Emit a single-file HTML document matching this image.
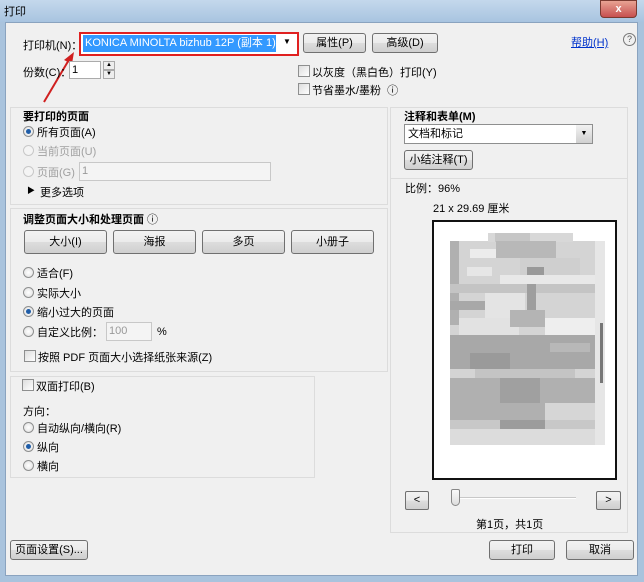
<!DOCTYPE html>
<html><head><meta charset="utf-8"><style>
*{box-sizing:border-box;margin:0;padding:0}
body{width:644px;height:582px;overflow:hidden;background:#a9c3dd;font-family:"Liberation Sans","Noto Sans CJK SC",sans-serif;font-size:11px;color:#000;position:relative}
.a{position:absolute;white-space:nowrap}
.title{left:0;top:0;width:644px;height:22px;background:linear-gradient(#c4d8ec,#a8c4e0)}
.dlg{left:5px;top:22px;width:633px;height:554px;background:#f0f0f0;border:1px solid #8aa3bf}
.panel{border:1px solid #dcdcdc;background:#f0f0f0}
.btn{border:1px solid #707070;border-radius:3px;background:linear-gradient(#f2f2f2,#ebebeb 50%,#dddddd 51%,#cfcfcf);text-align:center;font-size:11px}
.radio{width:11px;height:11px;border-radius:50%;border:1px solid #8e8f8f;background:radial-gradient(#fff,#ddd)}
.radio.on::after{content:"";position:absolute;left:2px;top:2px;width:5px;height:5px;border-radius:50%;background:#1f5da8}
.radio.dis{border-color:#c8c8c8;background:#f4f4f4}
.chk{width:12px;height:12px;border:1px solid #8e8f8f;background:linear-gradient(135deg,#ddd,#fff)}
.inp{border:1px solid #ababab;background:#fff}
.dis{color:#a0a0a0}
b{font-weight:bold}
</style></head><body>
<div class="a title"></div>
<div class="a" style="left:4px;top:3px;font-size:11px">打印</div>
<div class="a" style="left:600px;top:0;width:37px;height:18px;border-radius:0 0 4px 4px;background:linear-gradient(#e8a393,#c75050);border:1px solid #7a3a30;color:#fff;text-align:center;font-weight:bold;line-height:16px">x</div>
<div class="a dlg"></div>

<!-- top row -->
<div class="a" style="left:23px;top:37px">打印机(N)：</div>
<div class="a" style="left:79px;top:32px;width:220px;height:24px;border:2px solid #e02020;background:#fff"></div>
<div class="a" style="left:83px;top:35px;width:193px;height:17px;background:#3399ff;color:#fff;padding-left:2px;line-height:17px">KONICA MINOLTA bizhub 12P (副本 1)</div>
<div class="a" style="left:283px;top:37px;font-size:8px">▼</div>
<svg class="a" style="left:40px;top:50px" width="40" height="60"><line x1="4" y1="52" x2="30" y2="8" stroke="#d02020" stroke-width="2"/><polygon points="34,2 24,10 32,14" fill="#d02020"/></svg>
<div class="a btn" style="left:303px;top:33px;width:63px;height:20px;line-height:18px">属性(P)</div>
<div class="a btn" style="left:372px;top:33px;width:66px;height:20px;line-height:18px">高级(D)</div>
<div class="a" style="left:571px;top:34px;color:#0033cc;text-decoration:underline">帮助(H)</div>
<div class="a" style="left:623px;top:33px;width:13px;height:13px;border:1px solid #777;border-radius:50%;font-size:9px;text-align:center;line-height:11px;color:#555">?</div>

<div class="a" style="left:23px;top:64px">份数(C)：</div>
<div class="a inp" style="left:69px;top:61px;width:32px;height:18px;padding-left:2px;line-height:16px">1</div>
<div class="a" style="left:103px;top:61px;width:12px;height:9px;border:1px solid #aaa;background:#eee;font-size:6px;text-align:center;line-height:7px">▲</div>
<div class="a" style="left:103px;top:70px;width:12px;height:9px;border:1px solid #aaa;background:#eee;font-size:6px;text-align:center;line-height:7px">▼</div>
<div class="a chk" style="left:298px;top:65px"></div><div class="a" style="left:312px;top:64px">以灰度（黑白色）打印(Y)</div>
<div class="a chk" style="left:298px;top:83px"></div><div class="a" style="left:312px;top:82px">节省墨水/墨粉 &nbsp;ⓘ</div>

<!-- section 1 -->
<div class="a panel" style="left:10px;top:107px;width:378px;height:98px"></div>
<div class="a" style="left:23px;top:108px"><b>要打印的页面</b></div>
<div class="a radio on" style="left:23px;top:126px"></div><div class="a" style="left:37px;top:124px">所有页面(A)</div>
<div class="a radio dis" style="left:23px;top:145px"></div><div class="a dis" style="left:37px;top:143px">当前页面(U)</div>
<div class="a radio dis" style="left:23px;top:166px"></div><div class="a dis" style="left:37px;top:164px">页面(G)</div>
<div class="a inp" style="left:79px;top:162px;width:192px;height:19px;border-color:#c8c8c8;background:#f4f4f4;color:#999;padding-left:2px;line-height:17px">1</div>
<div class="a" style="left:27px;top:185px;font-size:8px">▶</div><div class="a" style="left:40px;top:184px">更多选项</div>

<!-- section 2 -->
<div class="a panel" style="left:10px;top:208px;width:378px;height:164px"></div>
<div class="a" style="left:23px;top:211px"><b>调整页面大小和处理页面</b> ⓘ</div>
<div class="a btn" style="left:24px;top:230px;width:83px;height:24px;line-height:22px">大小(I)</div>
<div class="a btn" style="left:113px;top:230px;width:83px;height:24px;line-height:22px">海报</div>
<div class="a btn" style="left:202px;top:230px;width:83px;height:24px;line-height:22px">多页</div>
<div class="a btn" style="left:291px;top:230px;width:83px;height:24px;line-height:22px">小册子</div>
<div class="a radio" style="left:23px;top:267px"></div><div class="a" style="left:37px;top:265px">适合(F)</div>
<div class="a radio" style="left:23px;top:287px"></div><div class="a" style="left:37px;top:285px">实际大小</div>
<div class="a radio on" style="left:23px;top:306px"></div><div class="a" style="left:37px;top:304px">缩小过大的页面</div>
<div class="a radio" style="left:23px;top:326px"></div><div class="a" style="left:37px;top:324px">自定义比例：</div>
<div class="a inp" style="left:106px;top:322px;width:46px;height:19px;border-color:#c8c8c8;background:#f4f4f4;color:#999;padding-left:2px;line-height:17px">100</div>
<div class="a" style="left:157px;top:326px">%</div>
<div class="a chk" style="left:24px;top:350px"></div><div class="a" style="left:38px;top:349px">按照 PDF 页面大小选择纸张来源(Z)</div>

<!-- section 3 -->
<div class="a panel" style="left:10px;top:376px;width:305px;height:102px"></div>
<div class="a chk" style="left:22px;top:379px"></div><div class="a" style="left:36px;top:378px">双面打印(B)</div>
<div class="a" style="left:23px;top:403px">方向：</div>
<div class="a radio" style="left:23px;top:422px"></div><div class="a" style="left:37px;top:420px">自动纵向/横向(R)</div>
<div class="a radio on" style="left:23px;top:441px"></div><div class="a" style="left:37px;top:439px">纵向</div>
<div class="a radio" style="left:23px;top:460px"></div><div class="a" style="left:37px;top:458px">横向</div>

<!-- right panel -->
<div class="a panel" style="left:390px;top:107px;width:238px;height:426px"></div>
<div class="a" style="left:390px;top:178px;width:238px;height:1px;background:#dcdcdc"></div>
<div class="a" style="left:404px;top:108px"><b>注释和表单(M)</b></div>
<div class="a inp" style="left:404px;top:124px;width:189px;height:20px;border-color:#8e8f8f;padding-left:3px;line-height:18px">文档和标记</div>
<div class="a" style="left:576px;top:125px;width:16px;height:18px;background:linear-gradient(#f2f2f2,#d0d0d0);font-size:7px;text-align:center;line-height:18px">▼</div>
<div class="a btn" style="left:404px;top:150px;width:69px;height:20px;line-height:18px">小结注释(T)</div>
<div class="a" style="left:405px;top:180px">比例：96%</div>
<div class="a" style="left:433px;top:200px">21 x 29.69 厘米</div>
<div class="a" style="left:432px;top:220px;width:185px;height:260px;border:2px solid #111;background:#fff"></div>
<svg class="a" style="left:450px;top:233px" width="156" height="225">
<rect x="0" y="8" width="155" height="204" fill="#d4d4d4"/>
<rect x="38" y="0" width="85" height="9" fill="#d8d8d8"/>
<rect x="45" y="0" width="35" height="9" fill="#c6c6c6"/>
<rect x="0" y="8" width="9" height="84" fill="#b0b0b0"/>
<rect x="20" y="16" width="26" height="9" fill="#ececec"/>
<rect x="46" y="8" width="60" height="17" fill="#b8b8b8"/>
<rect x="70" y="25" width="60" height="17" fill="#cfcfcf"/>
<rect x="77" y="34" width="17" height="9" fill="#999"/>
<rect x="17" y="34" width="25" height="9" fill="#e6e6e6"/>
<rect x="50" y="42" width="105" height="9" fill="#e8e8e8"/>
<rect x="0" y="51" width="155" height="9" fill="#c4c4c4"/>
<rect x="77" y="51" width="9" height="26" fill="#9e9e9e"/>
<rect x="35" y="60" width="40" height="25" fill="#e4e4e4"/>
<rect x="0" y="68" width="35" height="9" fill="#a8a8a8"/>
<rect x="9" y="85" width="60" height="17" fill="#e2e2e2"/>
<rect x="60" y="77" width="35" height="17" fill="#b4b4b4"/>
<rect x="95" y="85" width="55" height="17" fill="#eeeeee"/>
<rect x="0" y="102" width="155" height="34" fill="#a8a8a8"/>
<rect x="20" y="120" width="40" height="16" fill="#9a9a9a"/>
<rect x="100" y="110" width="40" height="9" fill="#b8b8b8"/>
<rect x="25" y="136" width="100" height="9" fill="#c4c4c4"/>
<rect x="0" y="145" width="155" height="42" fill="#b0b0b0"/>
<rect x="50" y="145" width="40" height="25" fill="#a0a0a0"/>
<rect x="95" y="170" width="50" height="17" fill="#d6d6d6"/>
<rect x="0" y="187" width="155" height="9" fill="#c8c8c8"/>
<rect x="50" y="187" width="45" height="9" fill="#9c9c9c"/>
<rect x="0" y="196" width="155" height="16" fill="#dcdcdc"/>
<rect x="145" y="8" width="10" height="204" fill="#e6e6e6"/>
<rect x="150" y="90" width="3" height="60" fill="#777"/>
</svg>
<div class="a btn" style="left:405px;top:491px;width:24px;height:19px;line-height:17px;border-radius:2px">&lt;</div>
<div class="a btn" style="left:596px;top:491px;width:25px;height:19px;line-height:17px;border-radius:2px">&gt;</div>
<div class="a" style="left:458px;top:497px;width:118px;height:2px;background:#c8c8c8;border-bottom:1px solid #fff"></div>
<div class="a" style="left:451px;top:489px;width:9px;height:17px;border:1px solid #888;border-radius:2px 2px 5px 5px;background:linear-gradient(#fafafa,#ddd)"></div>
<div class="a" style="left:476px;top:516px">第1页，共1页</div>

<!-- bottom -->
<div class="a btn" style="left:10px;top:540px;width:78px;height:20px;line-height:18px">页面设置(S)...</div>
<div class="a btn" style="left:489px;top:540px;width:66px;height:20px;line-height:18px">打印</div>
<div class="a btn" style="left:566px;top:540px;width:68px;height:20px;line-height:18px">取消</div>
</body></html>
